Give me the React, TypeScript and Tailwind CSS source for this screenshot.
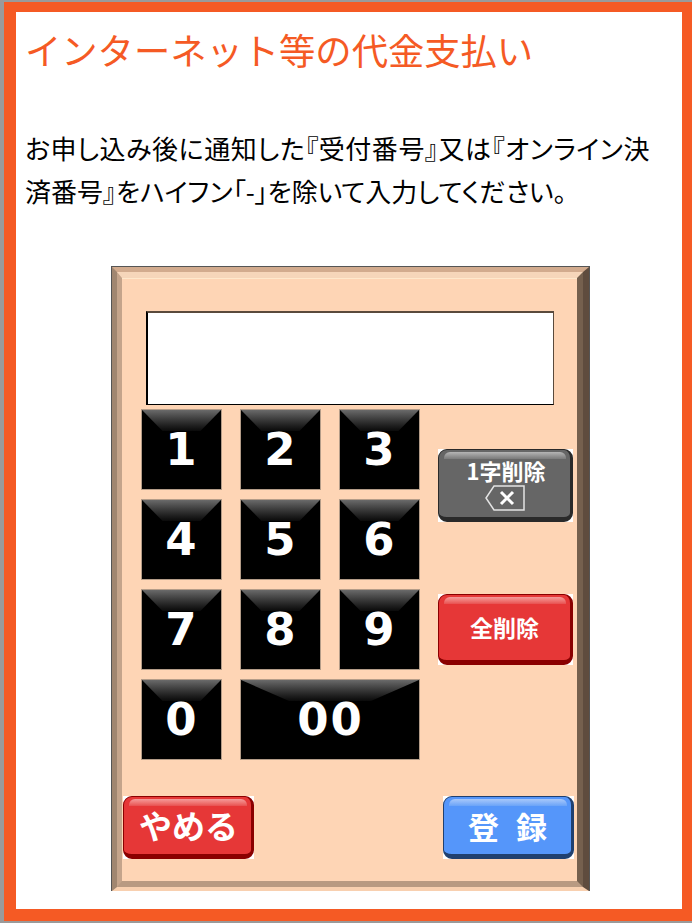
const jp = "font-['Noto_Sans_CJK_JP','Noto_Sans',sans-serif]";

function Key({ label, wide }: { label: string; wide?: boolean }) {
  return (
    <div
      className={`relative h-[81px] bg-black flex items-center justify-center border border-[#b39c88] ${
        wide ? "col-span-2" : ""
      }`}
    >
      <div
        className={`absolute top-0 left-0 right-0 h-[21px] bg-gradient-to-b from-[#6a6a6a] to-[#0a0a0a] ${
          wide
            ? "[clip-path:polygon(0_0,100%_0,73%_100%,27%_100%)]"
            : "[clip-path:polygon(0_0,100%_0,74%_100%,26%_100%)]"
        }`}
      />
      <span className="relative ml-[1px] font-['DejaVu_Sans',sans-serif] font-bold text-[45px] leading-none text-white tracking-[2px]">
        {label}
      </span>
    </div>
  );
}

function PanelButton({
  className,
  shine,
  children,
}: {
  className: string;
  shine: string;
  children: React.ReactNode;
}) {
  return (
    <div className="bg-white h-full w-full">
      <div
        className={`relative h-full w-full rounded-[9px] border-r-[3px] border-b-[5px] border-l border-t flex flex-col items-center justify-center text-white ${jp} ${className}`}
      >
        <div className={`absolute top-[2px] left-[5px] right-[4px] h-[7px] rounded-t-[6px] bg-gradient-to-b ${shine}`} />
        {children}
      </div>
    </div>
  );
}

export default function App() {
  return (
    <div className="w-[692px] h-[923px] bg-[#9a9a9a] pl-[4px] pt-[2px] pb-[2px]">
      <div className="h-full border-l-[12px] border-r-[10px] border-t-[10px] border-b-[12px] border-[#f55a24] bg-white pl-[9px] pt-[11px]">
        <h1 className={`text-[36.3px] leading-[52px] text-[#f55a24] font-normal whitespace-nowrap ${jp}`}>
          インターネット等の代金支払い
        </h1>
        <p className={`mt-[51px] text-[26px] leading-[43px] text-black w-[640px] whitespace-nowrap [font-feature-settings:'palt'] ${jp}`}>
          <span className="tracking-[0.55px]">お申し込み後に通知した『受付番号』又は『オンライン決</span>
          <br />
          済番号』をハイフン「-」を除いて入力してください。
        </p>

        <div className="mt-[54px] ml-[86px] w-[479px] h-[625px] border-t border-l border-r border-[#555555]">
          <div className="h-full border-t-[5px] border-l-[5px] border-r-[6px] border-b-[4px] border-t-[#d2ab8e] border-l-[#a08670] border-r-[#5f4c3e] border-b-[#f8d0b0]">
            <div className="h-full border-t-[6px] border-l-[5px] border-r-[6px] border-b-[6px] border-t-[#f6d6ba] border-l-[#c4a48b] border-r-[#75604e] border-b-[#b89a82] bg-[#fed5b5] shadow-[inset_0_1px_0_#ffe8cc]">
              <div className="pl-[1px] pr-[3px]">
                <div className="ml-[23px] mt-[33px] w-[408px] h-[94px] bg-white border-t-2 border-t-[#5a4a3c] border-l-2 border-l-black border-b border-b-black border-r border-r-[#5a4a3c]" />

                <div className="flex mt-[4px] ml-[18px]">
                  <div className="grid grid-cols-[81px_81px_81px] gap-x-[18px] gap-y-[9px]">
                    {["1", "2", "3", "4", "5", "6", "7", "8", "9", "0"].map((n) => (
                      <Key key={n} label={n} />
                    ))}
                    <Key label="00" wide />
                  </div>

                  <div className="ml-[18px] flex flex-col">
                    <div className="mt-[40px] w-[135px] h-[73px]">
                      <PanelButton
                        className="bg-[#666666] border-[#2a2a2a]"
                        shine="from-[#b5b5b5] to-[#7a7a7a]"
                      >
                        <span className="ml-[3px] text-[22px] leading-[26px] font-bold mt-[2px]">1字削除</span>
                        <svg width="42" height="28" viewBox="0 0 42 28" fill="none" className="mt-[1px]">
                          <path d="M40 2H10L2 14l8 12h30z" stroke="#e4e4e4" strokeWidth="1.5" />
                          <path d="M17 8l12 12M29 8L17 20" stroke="#fff" strokeWidth="3" />
                        </svg>
                      </PanelButton>
                    </div>
                    <div className="mt-[72px] w-[135px] h-[71px]">
                      <PanelButton
                        className="bg-[#e63737] border-[#8a0000]"
                        shine="from-[#f49a9a] to-[#e85050]"
                      >
                        <span className="text-[23px] leading-none font-bold">全削除</span>
                      </PanelButton>
                    </div>
                  </div>
                </div>

                <div className="flex justify-between mt-[36px]">
                  <div className="w-[131px] h-[63px]">
                    <PanelButton className="bg-[#e63737] border-[#8a0000]" shine="from-[#f49a9a] to-[#e85050]">
                      <span className="ml-[2px] text-[33px] leading-none font-bold">やめる</span>
                    </PanelButton>
                  </div>
                  <div className="w-[131px] h-[63px]">
                    <PanelButton className="bg-[#5596fa] border-[#20406f]" shine="from-[#a8c8fa] to-[#6aa3f8]">
                      <div className="flex gap-[17px] text-[31px] leading-none font-bold">
                        <span>登</span>
                        <span>録</span>
                      </div>
                    </PanelButton>
                  </div>
                </div>
              </div>
            </div>
          </div>
        </div>
      </div>
    </div>
  );
}
